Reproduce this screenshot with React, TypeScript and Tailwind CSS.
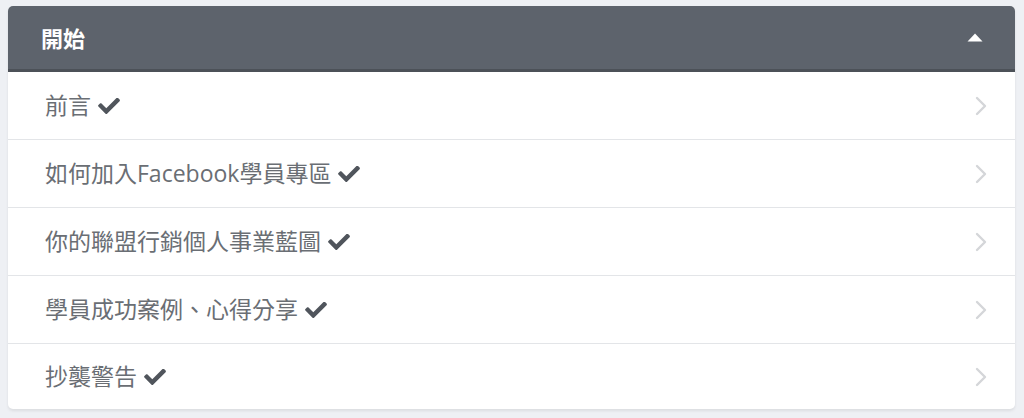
import React from "react";

const items = [
  "前言",
  "如何加入Facebook學員專區",
  "你的聯盟行銷個人事業藍圖",
  "學員成功案例、心得分享",
  "抄襲警告",
];

function Check() {
  return (
    <svg viewBox="0 0 512 376" className="w-[22px] h-[16px] ml-[7px] shrink-0" fill="#50555c">
      <path d="M173.9 368.6L7.5 202.2c-10-10-10-26.2 0-36.2l36.2-36.2c10-10 26.2-10 36.2 0L192 241.9 432.1 1.8c10-10 26.2-10 36.2 0l36.2 36.2c10 10 10 26.2 0 36.2L210.1 368.6c-10 10-26.2 10-36.2 0z" />
    </svg>
  );
}

function Chevron() {
  return (
    <svg viewBox="0 0 12 20" className="w-[12px] h-[20px]" fill="none" stroke="#d4d6d9" strokeWidth="2.4" strokeLinecap="round" strokeLinejoin="round">
      <polyline points="2,2 10,10 2,18" />
    </svg>
  );
}

export default function App() {
  return (
    <div className="w-[1024px] h-[418px] bg-[#eef0f4] pt-[6px] pl-[8px] pr-[9px]" style={{ fontFamily: '"Open Sans", "Noto Sans CJK TC", sans-serif' }}>
      <div className="bg-white rounded-[5px] overflow-hidden shadow-[0_2px_3px_rgba(0,0,0,0.08)]">
        <div className="h-[66px] bg-[#5d636c] border-b-[3px] border-[#4c5158] flex items-center justify-between pl-[33px] pr-[32px]">
          <span className="text-white text-[22px] font-bold leading-none">開始</span>
          <svg viewBox="0 0 16 9" className="w-[16px] h-[9px]" fill="white">
            <path d="M8 0.5 L15.5 8.5 L0.5 8.5 Z" strokeLinejoin="round" />
          </svg>
        </div>
        {items.map((t, i) => (
          <div
            key={t}
            className={`flex items-center justify-between pl-[37px] pr-[28px] ${i === items.length - 1 ? "h-[65px]" : "h-[68px] border-b border-[#e3e5e8]"}`}
          >
            <div className="flex items-center text-[23px] text-[#6a6e74] leading-none">
              <span>{t}</span>
              <Check />
            </div>
            <Chevron />
          </div>
        ))}
      </div>
    </div>
  );
}
